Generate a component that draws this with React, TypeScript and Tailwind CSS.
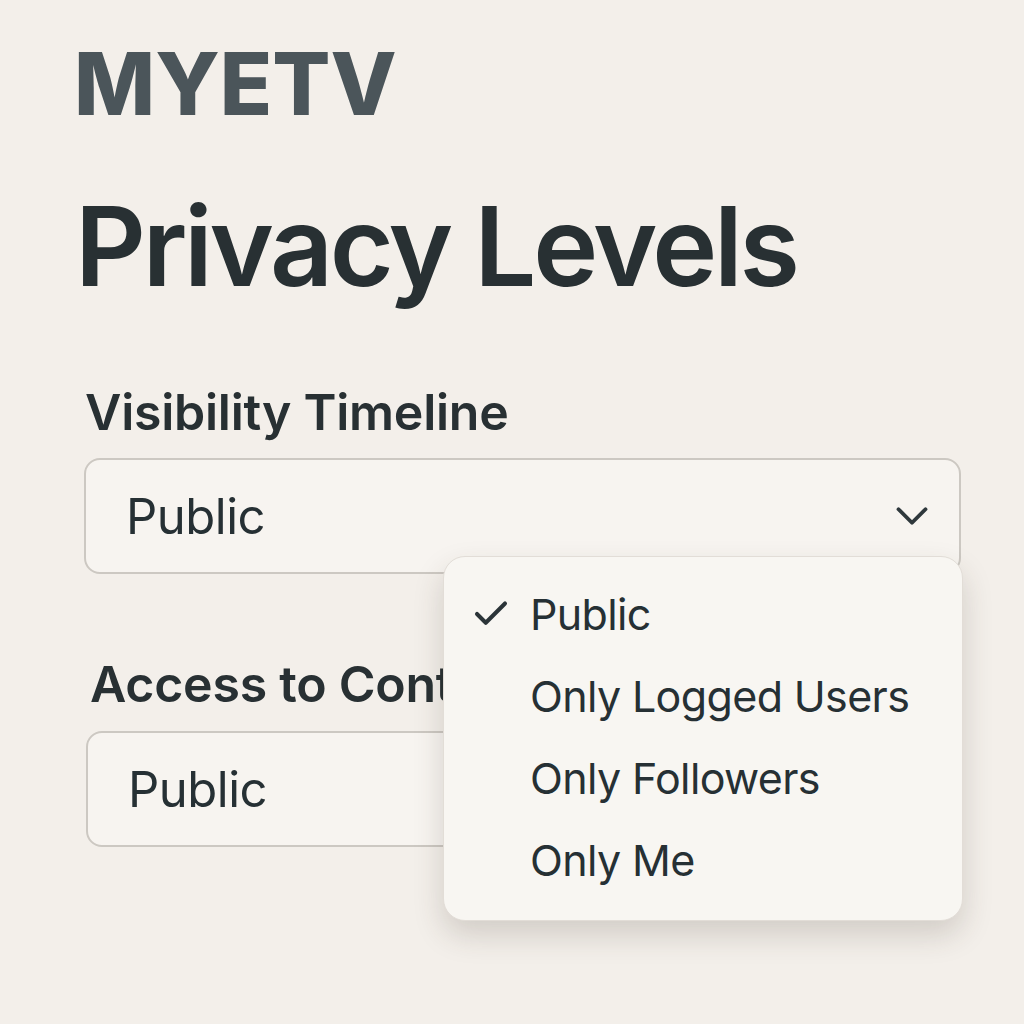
import { Check, ChevronDown } from 'lucide-react'

const options = ['Public', 'Only Logged Users', 'Only Followers', 'Only Me']

function SelectBox({ value, chevron }: { value: string; chevron?: boolean }) {
  return (
    <div className="flex h-[116px] w-[877px] items-center justify-between rounded-[16px] border-2 border-[#ccc8c2] bg-[#f7f4f0] pl-[40px] pr-[20px]">
      <span className="text-[49px] leading-none tracking-[-0.01em] text-[#263034]">{value}</span>
      {chevron && <ChevronDown size={54} strokeWidth={1.7} className="text-[#2f383c]" />}
    </div>
  )
}

export default function App() {
  const selected = 'Public'

  return (
    <div
      className="min-h-[1024px] w-[1024px] bg-[#f3efea] pl-[78px] pt-[41px]"
      style={{ fontFamily: 'Inter, "Noto Sans", sans-serif' }}
    >
      <div className="-ml-[4px] text-[86px] font-extrabold leading-none text-[#4b555a]">MYETV</div>

      <h1 className="mt-[64px] -ml-[3px] text-[110px] font-semibold leading-none tracking-[-0.03em] text-[#283033]">
        Privacy Levels
      </h1>

      <div className="mt-[86px] pl-[7px] text-[50px] font-semibold leading-none tracking-[-0.005em] text-[#283033]">
        Visibility Timeline
      </div>

      <div className="relative mt-[21px] pl-[6px]">
        <SelectBox value="Public" chevron />

        <div className="absolute left-[365px] top-[98px] z-10 h-[365px] w-[520px] rounded-[22px] border border-[#e2ddd7] bg-[#f8f6f2] pt-[16px] shadow-[0_14px_30px_rgba(60,50,40,0.18)]">
          {options.map((opt) => (
            <div key={opt} className="flex h-[82px] items-center">
              <div className="flex w-[86px] justify-end pr-[18px]">
                {opt === selected && <Check size={42} strokeWidth={2.3} className="text-[#2b3438]" />}
              </div>
              <span className="text-[43px] leading-none tracking-[-0.015em] text-[#263034]">{opt}</span>
            </div>
          ))}
        </div>
      </div>

      <div className="mt-[85px] pl-[12px] text-[50px] font-semibold leading-none tracking-[-0.005em] text-[#283033]">
        Access to Content
      </div>

      <div className="mt-[22px] pl-[8px]">
        <SelectBox value="Public" chevron />
      </div>
    </div>
  )
}
